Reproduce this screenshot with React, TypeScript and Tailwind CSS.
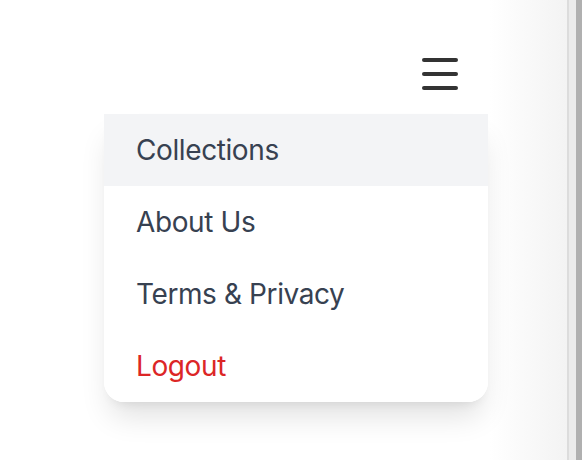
import React from 'react';
import { Menu } from 'lucide-react';

const items = [
  { label: 'Collections', active: true },
  { label: 'About Us' },
  { label: 'Terms & Privacy' },
  { label: 'Logout', danger: true },
];

const App: React.FC = () => {
  return (
    <div className="flex h-[460px] w-[582px] overflow-hidden bg-white font-['Inter','Liberation_Sans',sans-serif]">
      {/* Page */}
      <div className="flex w-[490px] justify-end pr-[26px] pt-[50px]">
        <div className="relative h-12 w-12">
          <button className="flex h-12 w-12 items-center justify-center text-[#333]">
            <Menu className="h-12 w-12" strokeWidth={2} />
          </button>

          {/* Dropdown */}
          <div className="absolute right-[-24px] top-16 z-10 w-96 overflow-hidden rounded-b-[20px] bg-white shadow-[0_20px_30px_-6px_rgba(0,0,0,0.12),0_8px_12px_-8px_rgba(0,0,0,0.1)]">
            {items.map(item => (
              <div
                key={item.label}
                className={`px-8 py-4 text-[28px] leading-10 tracking-[-0.4px] ${
                  item.active ? 'bg-[#f3f4f6]' : 'bg-white'
                } ${item.danger ? 'text-[#dc2626]' : 'text-[#374151]'}`}
              >
                {item.label}
              </div>
            ))}
          </div>
        </div>
      </div>

      {/* Window edge */}
      <div className="w-[77px] bg-gradient-to-r from-white to-[#f3f3f3]" />
      <div className="w-[2px] bg-[#dcdcdc]" />
      <div className="w-[7px] bg-[#ebebeb]" />
      <div className="w-[6px] bg-[#b0b0b0]" />
    </div>
  );
};

export default App;
